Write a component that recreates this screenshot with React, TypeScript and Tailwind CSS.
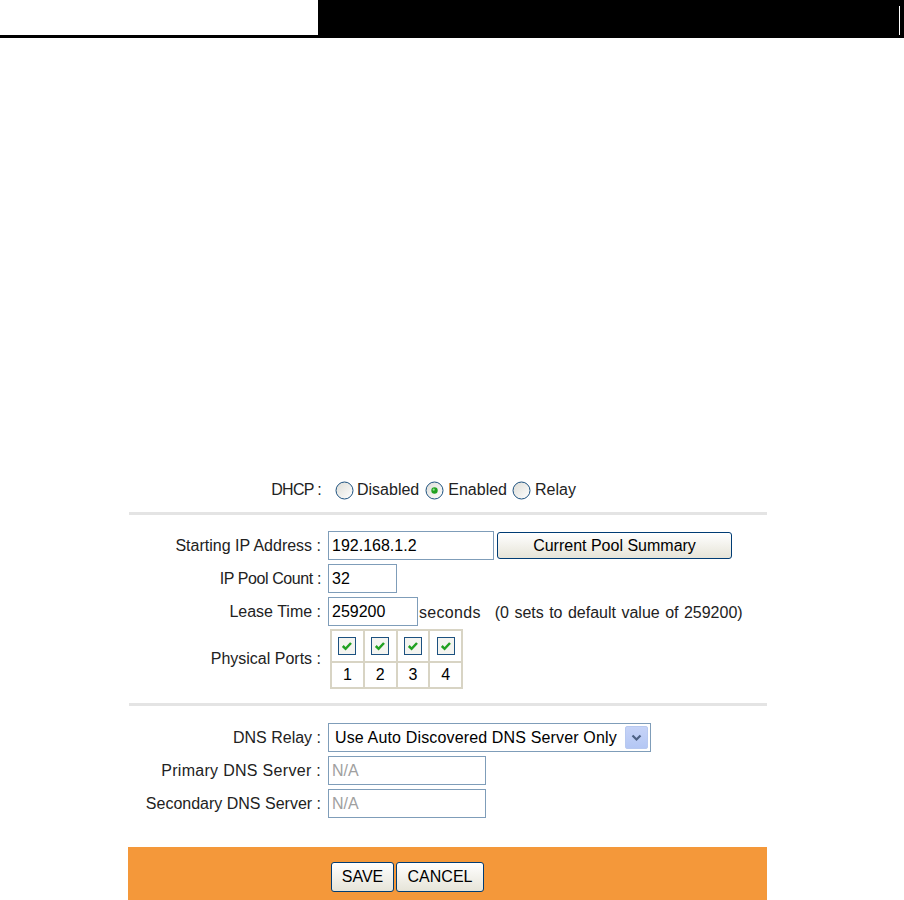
import React from 'react';

const font = { fontFamily: '"Liberation Sans", Arial, sans-serif' };

function Radio({ checked }: { checked?: boolean }) {
    return (
        <svg width="19" height="19" viewBox="0 0 19 19" className="shrink-0">
            <defs>
                <linearGradient id="rg" x1="0" y1="0" x2="1" y2="1">
                    <stop offset="0" stopColor="#dcdcd6" />
                    <stop offset="1" stopColor="#ffffff" />
                </linearGradient>
            </defs>
            <circle cx="9.5" cy="9.5" r="8.5" fill="url(#rg)" stroke="#1c5180" strokeWidth="1" />
            {checked && (
                <>
                    <circle cx="9.5" cy="9.5" r="3.2" fill="#21a121" />
                    <circle cx="8.7" cy="8.7" r="1.1" fill="#8fe08f" />
                </>
            )}
        </svg>
    );
}

function Check() {
    return (
        <svg width="18" height="18" viewBox="0 0 18 18">
            <rect x="0.5" y="0.5" width="17" height="17" fill="#f4f4f0" stroke="#1c5180" />
            <path d="M4.8 9 L7.6 11.8 L13 6" fill="none" stroke="#21a121" strokeWidth="2.5" />
        </svg>
    );
}

function TextBox({ value, w, muted }: { value: string; w: string; muted?: boolean }) {
    return (
        <div className={`${w} h-[29px] border border-[#7f9db9] bg-white flex items-center px-[3px] ${muted ? 'text-[#a0a0a0]' : 'text-black'}`}>
            {value}
        </div>
    );
}

function Label({ children, className }: { children: React.ReactNode; className?: string }) {
    return <div className={`w-[194px] text-right pr-[1px] shrink-0 whitespace-nowrap ${className ?? ''}`}>{children}</div>;
}

function XpButton({ children, className }: { children: React.ReactNode; className?: string }) {
    return (
        <div className={`flex items-center justify-center border border-[#003c74] rounded-[3px] bg-gradient-to-b from-white to-[#e6e4d8] text-black ${className ?? ''}`}>
            {children}
        </div>
    );
}

export default function App() {
    return (
        <div className="w-[904px] h-[900px] bg-white overflow-hidden text-[16px] text-[#222]" style={font}>
            {/* header */}
            <div className="flex h-[38px]">
                <div className="w-[318px] h-[38px] border-b-[3px] border-black" />
                <div className="flex-1 bg-black flex justify-end items-start pr-[4px] pt-[6px]">
                    <div className="w-[1px] h-[29px] bg-white" />
                </div>
            </div>

            <div className="ml-[128px] w-[639px] mt-[440px]">
                {/* DHCP */}
                <div className="flex items-center h-[24px] mt-[1px]">
                    <Label className="tracking-[-0.7px]">DHCP :</Label>
                    <div className="flex items-center ml-[13px]">
                        <Radio />
                        <span className="ml-[3px] mr-[6px]">Disabled</span>
                        <Radio checked />
                        <span className="ml-[4px] mr-[5px]">Enabled</span>
                        <Radio />
                        <span className="ml-[4px]">Relay</span>
                    </div>
                </div>

                <div className="h-[3px] bg-[#e4e4e4] mt-[10px] ml-[1px]" />

                <div className="mt-[16px] flex flex-col gap-[4px]">
                    <div className="flex items-center">
                        <Label>Starting IP Address :</Label>
                        <div className="ml-[6px] flex items-center gap-[3px]">
                            <TextBox value="192.168.1.2" w="w-[166px]" />
                            <XpButton className="w-[235px] h-[27px]">Current Pool Summary</XpButton>
                        </div>
                    </div>
                    <div className="flex items-center">
                        <Label className="tracking-[-0.4px]">IP Pool Count :</Label>
                        <div className="ml-[6px]">
                            <TextBox value="32" w="w-[69px]" />
                        </div>
                    </div>
                    <div className="flex items-center">
                        <Label>Lease Time :</Label>
                        <div className="ml-[6px] flex items-end">
                            <TextBox value="259200" w="w-[90px]" />
                            <span className="ml-[1px] mb-[1px] tracking-[0.3px]">seconds</span>
                            <span className="ml-[14px] mb-[1px] [word-spacing:1px]">(0 sets to default value of 259200)</span>
                        </div>
                    </div>
                    <div className="flex items-center -mt-[1px]">
                        <Label>Physical Ports :</Label>
                        <div className="ml-[8px] border border-[#d8d4c4] grid grid-cols-4 w-[133px] bg-white">
                            {[1, 2, 3, 4].map((n) => (
                                <div key={`c${n}`} className="h-[32px] border border-[#d8d4c4] flex items-center justify-center">
                                    <Check />
                                </div>
                            ))}
                            {[1, 2, 3, 4].map((n) => (
                                <div key={`n${n}`} className="h-[26px] border border-[#d8d4c4] flex items-center justify-center text-black">
                                    {n}
                                </div>
                            ))}
                        </div>
                    </div>
                </div>

                <div className="h-[3px] bg-[#e4e4e4] mt-[14px] ml-[1px]" />

                <div className="mt-[17px] flex flex-col gap-[4px]">
                    <div className="flex items-center">
                        <Label>DNS Relay :</Label>
                        <div className="ml-[6px] w-[323px] h-[29px] border border-[#7f9db9] bg-white flex items-center justify-between pl-[6px] pr-[2px] text-black">
                            <span className="tracking-[0.15px]">Use Auto Discovered DNS Server Only</span>
                            <div className="w-[23px] h-[23px] rounded-[2px] bg-gradient-to-b from-[#c6d3f7] to-[#b4c7f4] border border-[#b8c9f0] flex items-center justify-center">
                                <svg width="11" height="8" viewBox="0 0 11 8">
                                    <path d="M1.5 1.5 L5.5 5.5 L9.5 1.5" fill="none" stroke="#4d6185" strokeWidth="2.2" />
                                </svg>
                            </div>
                        </div>
                    </div>
                    <div className="flex items-center">
                        <Label className="tracking-[0.3px]">Primary DNS Server :</Label>
                        <div className="ml-[6px]">
                            <TextBox value="N/A" w="w-[158px]" muted />
                        </div>
                    </div>
                    <div className="flex items-center">
                        <Label>Secondary DNS Server :</Label>
                        <div className="ml-[6px]">
                            <TextBox value="N/A" w="w-[158px]" muted />
                        </div>
                    </div>
                </div>

                {/* footer */}
                <div className="mt-[29px] h-[60px] bg-[#f4983a] flex items-start pt-[15px] pl-[203px] gap-[2px]">
                    <XpButton className="w-[63px] h-[30px]">SAVE</XpButton>
                    <XpButton className="w-[88px] h-[30px]">CANCEL</XpButton>
                </div>
            </div>
        </div>
    );
}
